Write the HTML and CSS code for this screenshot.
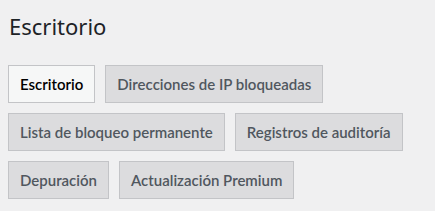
FILE: index.html
```html
<!DOCTYPE html>
<html lang="es">

<head>
    <meta charset="utf-8">
    <meta name="viewport" content="width=device-width, initial-scale=1.0">
    <title>Escritorio</title>
    <link rel="stylesheet" href="styles.css">
</head>

<body>

    <div class="wrap">
        <h1>Escritorio</h1>

        <nav class="nav_tabs">
            <a class="nav_tab nav_tab_active" href="#">Escritorio</a>
            <a class="nav_tab" href="#">Direcciones de IP bloqueadas</a>
            <a class="nav_tab" href="#">Lista de bloqueo permanente</a>
            <a class="nav_tab" href="#">Registros de auditoría</a>
            <a class="nav_tab" href="#">Depuración</a>
            <a class="nav_tab" href="#">Actualización Premium</a>
        </nav>
    </div>

</body></html>
```

FILE: styles.css
```css
* {
    box-sizing: border-box;
}

body {
    margin: 0;
    background-color: #f0f0f1;
    font-family: "Noto Sans", "Open Sans", sans-serif;
    color: #1d2327;
}

.wrap {
    padding: 10px 8px 0 8px;
}

h1 {
    margin: 0 0 0 1px;
    font-size: 22px;
    font-weight: 400;
    line-height: 33px;
}

.nav_tabs {
    display: flex;
    flex-wrap: wrap;
    gap: 10px;
    margin-top: 22px;
}

.nav_tab {
    display: block;
    padding: 5px 11px;
    border: 1px solid #c3c4c7;
    background-color: #dcdcde;
    color: #50575e;
    font-family: "Lato", "Noto Sans", sans-serif;
    font-size: 15px;
    font-weight: 600;
    line-height: 26px;
    text-decoration: none;
    white-space: nowrap;
}

.nav_tab_active {
    background-color: #f6f7f7;
    color: #000;
}
```
